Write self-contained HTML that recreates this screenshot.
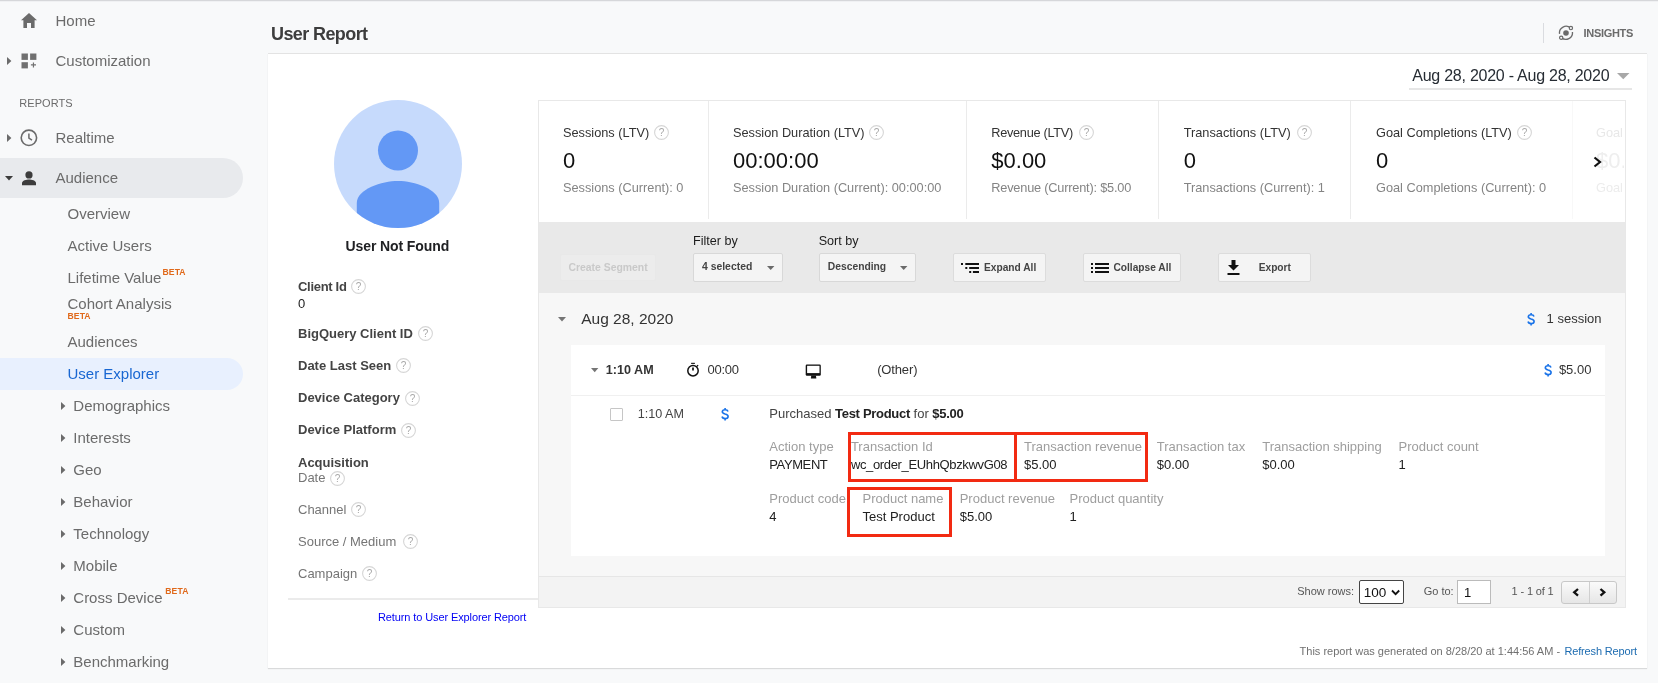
<!DOCTYPE html>
<html><head><meta charset="utf-8"><style>
html,body{margin:0;padding:0}
body{will-change:transform;width:1658px;height:683px;overflow:hidden;position:relative;background:#f8f9fa;font-family:"Liberation Sans",sans-serif}
.t{position:absolute;white-space:nowrap;line-height:1}
.r{position:absolute;display:block}
b{font-weight:700}
</style></head><body>
<div class="r" style="left:0px;top:0px;width:1658px;height:1px;background:#d6d7da"></div>
<div class="r" style="left:0px;top:1px;width:1658px;height:1px;background:#f0f1f3"></div>
<div class="r" style="left:0px;top:158px;width:243px;height:40px;background:#e8eaed;border-radius:0 20px 20px 0"></div>
<div class="r" style="left:0px;top:358px;width:243px;height:32px;background:#e8f0fe;border-radius:0 16px 16px 0"></div>
<svg class="r" style="left:21px;top:13px;" width="16" height="15" viewBox="0 0 16 15"><path d="M8 0 L16 7.2 L13.6 7.2 L13.6 15 L10 15 L10 10 L6 10 L6 15 L2.4 15 L2.4 7.2 L0 7.2 Z" fill="#6b6b6b"/></svg>
<div class="t" style="left:55.5px;top:13.00px;font-size:15px;color:#6b6b6b;font-weight:400;">Home</div>
<svg class="r" style="left:7px;top:57px;" width="5" height="8" viewBox="0 0 5 8"><path d="M0 0 L4.4 4 L0 8 Z" fill="#6b6b6b"/></svg>
<svg class="r" style="left:21px;top:53px;" width="16" height="16" viewBox="0 0 16 16"><rect x="0.5" y="0.5" width="6.4" height="6.4" fill="#707070"/><rect x="9.1" y="0.5" width="6.3" height="6.4" fill="#707070"/><rect x="0.5" y="9.2" width="6.4" height="6.2" fill="#707070"/><path d="M12.45 9.4v5.1M9.9 11.95h5.1" stroke="#707070" stroke-width="1.2"/></svg>
<div class="t" style="left:55.5px;top:53.00px;font-size:15px;color:#6b6b6b;font-weight:400;">Customization</div>
<div class="t" style="left:19.3px;top:98.00px;font-size:11px;color:#6b6b6b;font-weight:400;letter-spacing:0.05px">REPORTS</div>
<svg class="r" style="left:7px;top:134px;" width="5" height="8" viewBox="0 0 5 8"><path d="M0 0 L4.4 4 L0 8 Z" fill="#6b6b6b"/></svg>
<svg class="r" style="left:20px;top:129px;" width="18" height="18" viewBox="0 0 18 18"><circle cx="8.9" cy="8.8" r="7.7" fill="none" stroke="#6b6b6b" stroke-width="1.6"/><path d="M8.9 4.4 V9.1 L12 11.1" fill="none" stroke="#6b6b6b" stroke-width="1.5"/></svg>
<div class="t" style="left:55.5px;top:130.00px;font-size:15px;color:#6b6b6b;font-weight:400;">Realtime</div>
<svg class="r" style="left:5px;top:176px;" width="8" height="5" viewBox="0 0 8 5"><path d="M0 0 L8 0 L4 4.4 Z" fill="#3c3c3c"/></svg>
<svg class="r" style="left:22px;top:170px;" width="14" height="16" viewBox="0 0 14 16"><circle cx="7" cy="4.9" r="3.6" fill="#3c3c3c"/><path d="M0 15.2 V13 C0 10.6 4.5 9.5 7 9.5 C9.5 9.5 14 10.6 14 13 V15.2 Z" fill="#3c3c3c"/></svg>
<div class="t" style="left:55.5px;top:170.00px;font-size:15px;color:#6b6b6b;font-weight:400;">Audience</div>
<div class="t" style="left:67.5px;top:206.00px;font-size:15px;color:#6b6b6b;font-weight:400;">Overview</div>
<div class="t" style="left:67.5px;top:238.00px;font-size:15px;color:#6b6b6b;font-weight:400;">Active Users</div>
<div class="t" style="left:67.5px;top:270.00px;font-size:15px;color:#6b6b6b;font-weight:400;">Lifetime Value</div>
<div class="t" style="left:67.5px;top:296.00px;font-size:15px;color:#6b6b6b;font-weight:400;">Cohort Analysis</div>
<div class="t" style="left:67.5px;top:334.00px;font-size:15px;color:#6b6b6b;font-weight:400;">Audiences</div>
<div class="t" style="left:162.5px;top:268.00px;font-size:8.6px;color:#e0691a;font-weight:700;letter-spacing:0.1px">BETA</div>
<div class="t" style="left:67.5px;top:312.00px;font-size:8.6px;color:#e0691a;font-weight:700;letter-spacing:0.1px">BETA</div>
<div class="t" style="left:67.5px;top:366.00px;font-size:15px;color:#1967d2;font-weight:400;">User Explorer</div>
<svg class="r" style="left:61px;top:401.9px;" width="5" height="8" viewBox="0 0 5 8"><path d="M0 0 L4.4 4 L0 8 Z" fill="#6b6b6b"/></svg>
<div class="t" style="left:73.3px;top:398.00px;font-size:15px;color:#6b6b6b;font-weight:400;">Demographics</div>
<svg class="r" style="left:61px;top:433.9px;" width="5" height="8" viewBox="0 0 5 8"><path d="M0 0 L4.4 4 L0 8 Z" fill="#6b6b6b"/></svg>
<div class="t" style="left:73.3px;top:430.00px;font-size:15px;color:#6b6b6b;font-weight:400;">Interests</div>
<svg class="r" style="left:61px;top:465.9px;" width="5" height="8" viewBox="0 0 5 8"><path d="M0 0 L4.4 4 L0 8 Z" fill="#6b6b6b"/></svg>
<div class="t" style="left:73.3px;top:462.00px;font-size:15px;color:#6b6b6b;font-weight:400;">Geo</div>
<svg class="r" style="left:61px;top:497.9px;" width="5" height="8" viewBox="0 0 5 8"><path d="M0 0 L4.4 4 L0 8 Z" fill="#6b6b6b"/></svg>
<div class="t" style="left:73.3px;top:494.00px;font-size:15px;color:#6b6b6b;font-weight:400;">Behavior</div>
<svg class="r" style="left:61px;top:529.9px;" width="5" height="8" viewBox="0 0 5 8"><path d="M0 0 L4.4 4 L0 8 Z" fill="#6b6b6b"/></svg>
<div class="t" style="left:73.3px;top:526.00px;font-size:15px;color:#6b6b6b;font-weight:400;">Technology</div>
<svg class="r" style="left:61px;top:561.9px;" width="5" height="8" viewBox="0 0 5 8"><path d="M0 0 L4.4 4 L0 8 Z" fill="#6b6b6b"/></svg>
<div class="t" style="left:73.3px;top:558.00px;font-size:15px;color:#6b6b6b;font-weight:400;">Mobile</div>
<svg class="r" style="left:61px;top:593.9px;" width="5" height="8" viewBox="0 0 5 8"><path d="M0 0 L4.4 4 L0 8 Z" fill="#6b6b6b"/></svg>
<div class="t" style="left:73.3px;top:590.00px;font-size:15px;color:#6b6b6b;font-weight:400;">Cross Device</div>
<svg class="r" style="left:61px;top:625.9px;" width="5" height="8" viewBox="0 0 5 8"><path d="M0 0 L4.4 4 L0 8 Z" fill="#6b6b6b"/></svg>
<div class="t" style="left:73.3px;top:622.00px;font-size:15px;color:#6b6b6b;font-weight:400;">Custom</div>
<svg class="r" style="left:61px;top:657.9px;" width="5" height="8" viewBox="0 0 5 8"><path d="M0 0 L4.4 4 L0 8 Z" fill="#6b6b6b"/></svg>
<div class="t" style="left:73.3px;top:654.00px;font-size:15px;color:#6b6b6b;font-weight:400;">Benchmarking</div>
<div class="t" style="left:165.3px;top:587.00px;font-size:8.6px;color:#e0691a;font-weight:700;letter-spacing:0.1px">BETA</div>
<div class="t" style="left:271px;top:25.00px;font-size:18px;color:#3d3d3d;font-weight:700;letter-spacing:-0.6px">User Report</div>
<div class="r" style="left:1543px;top:23px;width:1px;height:20px;background:#dadce0"></div>
<svg class="r" style="left:1558px;top:25px;" width="17" height="17" viewBox="0 0 17 17"><path d="M1.6 8.9 A6.5 6.5 0 0 1 12.6 3.2" fill="none" stroke="#6b6b6b" stroke-width="1.35"/><path d="M14.45 7.0 A6.5 6.5 0 0 1 3.4 12.4" fill="none" stroke="#6b6b6b" stroke-width="1.35"/><circle cx="12.9" cy="3.1" r="1.65" fill="#f8f9fa" stroke="#6b6b6b" stroke-width="1.2"/><circle cx="3.2" cy="12.7" r="1.65" fill="#f8f9fa" stroke="#6b6b6b" stroke-width="1.2"/><circle cx="8" cy="8" r="2.8" fill="#6b6b6b"/></svg>
<div class="t" style="left:1583.5px;top:28.00px;font-size:11px;color:#6b6b6b;font-weight:700;letter-spacing:-0.3px">INSIGHTS</div>
<div class="r" style="left:268px;top:53px;width:1379px;height:613.5px;background:#fff;border-top:1px solid #e3e3e3;box-shadow:0 1px 1px rgba(0,0,0,0.12)"></div>
<div class="t" style="left:1412.3px;top:68.00px;font-size:16px;color:#262c33;font-weight:400;letter-spacing:-0.25px">Aug 28, 2020 - Aug 28, 2020</div>
<svg class="r" style="left:1617px;top:73px;" width="13" height="8" viewBox="0 0 13 8"><path d="M0 0 L12.5 0 L6.25 6.3 Z" fill="#a8a8a8"/></svg>
<div class="r" style="left:1409px;top:88px;width:223px;height:2px;background:#e6e6e6"></div>
<svg class="r" style="left:334px;top:100px;" width="128" height="128" viewBox="0 0 128 128"><defs><clipPath id="cc"><circle cx="64" cy="64" r="64"/></clipPath></defs><circle cx="64" cy="64" r="64" fill="#c6dafc"/><circle cx="64" cy="50.5" r="20" fill="#6398f5"/><path clip-path="url(#cc)" d="M22.8 140 V103 C22.8 89 48 81 64 81 C80 81 105.2 89 105.2 103 V140 Z" fill="#6398f5"/></svg>
<div class="t" style="left:345.5px;top:239.00px;font-size:14px;color:#202124;font-weight:700;letter-spacing:-0.1px">User Not Found</div>
<div class="t" style="left:298px;top:280.00px;font-size:13px;color:#444;font-weight:700;letter-spacing:-0.3px">Client Id</div>
<svg class="r" style="left:351.2px;top:278.6px" width="15" height="15" viewBox="0 0 15 15"><circle cx="7.5" cy="7.5" r="6.9" fill="none" stroke="#d6d6d6" stroke-width="1.1"/><text x="7.5" y="11.1" text-anchor="middle" font-family="Liberation Sans" font-size="10" fill="#a8a8a8">?</text></svg>
<div class="t" style="left:298px;top:297.00px;font-size:13px;color:#222;font-weight:400;">0</div>
<div class="t" style="left:298px;top:327.00px;font-size:13px;color:#444;font-weight:700;">BigQuery Client ID</div>
<svg class="r" style="left:418px;top:326px" width="15" height="15" viewBox="0 0 15 15"><circle cx="7.5" cy="7.5" r="6.9" fill="none" stroke="#d6d6d6" stroke-width="1.1"/><text x="7.5" y="11.1" text-anchor="middle" font-family="Liberation Sans" font-size="10" fill="#a8a8a8">?</text></svg>
<div class="t" style="left:298px;top:359.00px;font-size:13px;color:#444;font-weight:700;">Date Last Seen</div>
<svg class="r" style="left:396px;top:358.2px" width="15" height="15" viewBox="0 0 15 15"><circle cx="7.5" cy="7.5" r="6.9" fill="none" stroke="#d6d6d6" stroke-width="1.1"/><text x="7.5" y="11.1" text-anchor="middle" font-family="Liberation Sans" font-size="10" fill="#a8a8a8">?</text></svg>
<div class="t" style="left:298px;top:391.00px;font-size:13px;color:#444;font-weight:700;">Device Category</div>
<svg class="r" style="left:405.4px;top:390.6px" width="15" height="15" viewBox="0 0 15 15"><circle cx="7.5" cy="7.5" r="6.9" fill="none" stroke="#d6d6d6" stroke-width="1.1"/><text x="7.5" y="11.1" text-anchor="middle" font-family="Liberation Sans" font-size="10" fill="#a8a8a8">?</text></svg>
<div class="t" style="left:298px;top:423.00px;font-size:13px;color:#444;font-weight:700;">Device Platform</div>
<svg class="r" style="left:401.3px;top:422.7px" width="15" height="15" viewBox="0 0 15 15"><circle cx="7.5" cy="7.5" r="6.9" fill="none" stroke="#d6d6d6" stroke-width="1.1"/><text x="7.5" y="11.1" text-anchor="middle" font-family="Liberation Sans" font-size="10" fill="#a8a8a8">?</text></svg>
<div class="t" style="left:298px;top:456.00px;font-size:13px;color:#444;font-weight:700;">Acquisition</div>
<div class="t" style="left:298px;top:471.00px;font-size:13px;color:#757575;font-weight:400;">Date</div>
<svg class="r" style="left:330px;top:471px" width="15" height="15" viewBox="0 0 15 15"><circle cx="7.5" cy="7.5" r="6.9" fill="none" stroke="#d6d6d6" stroke-width="1.1"/><text x="7.5" y="11.1" text-anchor="middle" font-family="Liberation Sans" font-size="10" fill="#a8a8a8">?</text></svg>
<div class="t" style="left:298px;top:503.00px;font-size:13px;color:#757575;font-weight:400;">Channel</div>
<svg class="r" style="left:350.9px;top:502px" width="15" height="15" viewBox="0 0 15 15"><circle cx="7.5" cy="7.5" r="6.9" fill="none" stroke="#d6d6d6" stroke-width="1.1"/><text x="7.5" y="11.1" text-anchor="middle" font-family="Liberation Sans" font-size="10" fill="#a8a8a8">?</text></svg>
<div class="t" style="left:298px;top:535.00px;font-size:13px;color:#757575;font-weight:400;">Source / Medium</div>
<svg class="r" style="left:402.7px;top:534px" width="15" height="15" viewBox="0 0 15 15"><circle cx="7.5" cy="7.5" r="6.9" fill="none" stroke="#d6d6d6" stroke-width="1.1"/><text x="7.5" y="11.1" text-anchor="middle" font-family="Liberation Sans" font-size="10" fill="#a8a8a8">?</text></svg>
<div class="t" style="left:298px;top:567.00px;font-size:13px;color:#757575;font-weight:400;">Campaign</div>
<svg class="r" style="left:362px;top:566px" width="15" height="15" viewBox="0 0 15 15"><circle cx="7.5" cy="7.5" r="6.9" fill="none" stroke="#d6d6d6" stroke-width="1.1"/><text x="7.5" y="11.1" text-anchor="middle" font-family="Liberation Sans" font-size="10" fill="#a8a8a8">?</text></svg>
<div class="r" style="left:288px;top:598px;width:250px;height:2px;background:#ebebeb"></div>
<div class="t" style="left:378px;top:612.00px;font-size:11px;color:#0000f5;font-weight:400;letter-spacing:-0.11px">Return to User Explorer Report</div>
<div class="r" style="left:538px;top:100px;width:1088px;height:508px;border:1px solid #e8e8e8;box-sizing:border-box;background:#f7f7f7"></div>
<div class="r" style="left:539px;top:101px;width:1086px;height:121px;background:#fff"></div>
<div class="r" style="left:708px;top:101px;width:1px;height:118px;background:#ebebeb"></div>
<div class="r" style="left:966px;top:101px;width:1px;height:118px;background:#ebebeb"></div>
<div class="r" style="left:1158px;top:101px;width:1px;height:118px;background:#ebebeb"></div>
<div class="r" style="left:1350px;top:101px;width:1px;height:118px;background:#ebebeb"></div>
<div class="r" style="left:1572px;top:101px;width:1px;height:118px;background:#f8f8f8"></div>
<div class="t" style="left:563px;top:127.00px;font-size:12.75px;color:#333;font-weight:400;">Sessions (LTV)</div>
<svg class="r" style="left:654.2px;top:125.3px" width="15" height="15" viewBox="0 0 15 15"><circle cx="7.5" cy="7.5" r="6.9" fill="none" stroke="#d6d6d6" stroke-width="1.1"/><text x="7.5" y="11.1" text-anchor="middle" font-family="Liberation Sans" font-size="10" fill="#a8a8a8">?</text></svg>
<div class="t" style="left:563px;top:150.00px;font-size:22px;color:#111;font-weight:400;">0</div>
<div class="t" style="left:563px;top:182.00px;font-size:12.75px;color:#848484;font-weight:400;">Sessions (Current): 0</div>
<div class="t" style="left:733px;top:127.00px;font-size:12.75px;color:#333;font-weight:400;">Session Duration (LTV)</div>
<svg class="r" style="left:869.3px;top:125.3px" width="15" height="15" viewBox="0 0 15 15"><circle cx="7.5" cy="7.5" r="6.9" fill="none" stroke="#d6d6d6" stroke-width="1.1"/><text x="7.5" y="11.1" text-anchor="middle" font-family="Liberation Sans" font-size="10" fill="#a8a8a8">?</text></svg>
<div class="t" style="left:733px;top:150.00px;font-size:22px;color:#111;font-weight:400;">00:00:00</div>
<div class="t" style="left:733px;top:182.00px;font-size:12.75px;color:#848484;font-weight:400;">Session Duration (Current): 00:00:00</div>
<div class="t" style="left:991.3px;top:127.00px;font-size:12.75px;color:#333;font-weight:400;letter-spacing:-0.3px">Revenue (LTV)</div>
<svg class="r" style="left:1079px;top:125.3px" width="15" height="15" viewBox="0 0 15 15"><circle cx="7.5" cy="7.5" r="6.9" fill="none" stroke="#d6d6d6" stroke-width="1.1"/><text x="7.5" y="11.1" text-anchor="middle" font-family="Liberation Sans" font-size="10" fill="#a8a8a8">?</text></svg>
<div class="t" style="left:991.3px;top:150.00px;font-size:22px;color:#111;font-weight:400;">$0.00</div>
<div class="t" style="left:991.3px;top:182.00px;font-size:12.75px;color:#848484;font-weight:400;letter-spacing:-0.2px">Revenue (Current): $5.00</div>
<div class="t" style="left:1183.7px;top:127.00px;font-size:12.75px;color:#333;font-weight:400;">Transactions (LTV)</div>
<svg class="r" style="left:1297.2px;top:125.3px" width="15" height="15" viewBox="0 0 15 15"><circle cx="7.5" cy="7.5" r="6.9" fill="none" stroke="#d6d6d6" stroke-width="1.1"/><text x="7.5" y="11.1" text-anchor="middle" font-family="Liberation Sans" font-size="10" fill="#a8a8a8">?</text></svg>
<div class="t" style="left:1183.7px;top:150.00px;font-size:22px;color:#111;font-weight:400;">0</div>
<div class="t" style="left:1183.7px;top:182.00px;font-size:12.75px;color:#848484;font-weight:400;">Transactions (Current): 1</div>
<div class="t" style="left:1376px;top:127.00px;font-size:12.75px;color:#333;font-weight:400;">Goal Completions (LTV)</div>
<svg class="r" style="left:1517px;top:125.3px" width="15" height="15" viewBox="0 0 15 15"><circle cx="7.5" cy="7.5" r="6.9" fill="none" stroke="#d6d6d6" stroke-width="1.1"/><text x="7.5" y="11.1" text-anchor="middle" font-family="Liberation Sans" font-size="10" fill="#a8a8a8">?</text></svg>
<div class="t" style="left:1376px;top:150.00px;font-size:22px;color:#111;font-weight:400;">0</div>
<div class="t" style="left:1376px;top:182.00px;font-size:12.75px;color:#848484;font-weight:400;">Goal Completions (Current): 0</div>
<div class="t" style="left:1596px;top:127.00px;font-size:12.75px;color:#e8e8e8;font-weight:400;">Goal</div>
<div class="t" style="left:1596px;top:150.00px;font-size:22px;color:#eeeeee;font-weight:400;">$0.</div>
<div class="t" style="left:1596px;top:182.00px;font-size:12.75px;color:#ececec;font-weight:400;">Goal</div>
<div class="r" style="left:1624px;top:101px;width:1px;height:120px;background:#fff"></div>
<svg class="r" style="left:1593px;top:156px;" width="9" height="12" viewBox="0 0 9 12"><path d="M1.5 1.5 L7 6 L1.5 10.5" fill="none" stroke="#111" stroke-width="2.2"/></svg>
<div class="r" style="left:539px;top:222px;width:1086px;height:71px;background:#e9e9e9"></div>
<div class="r" style="left:560px;top:254px;width:96px;height:27px;background:#ececec;border:1px solid #e8e8e8;box-sizing:border-box;border-radius:2px"></div>
<div class="t" style="left:568.5px;top:263.00px;font-size:10.4px;color:#c9c9c9;font-weight:700;">Create Segment</div>
<div class="t" style="left:693px;top:235.00px;font-size:12.6px;color:#1c1c1c;font-weight:400;">Filter by</div>
<div class="t" style="left:818.7px;top:235.00px;font-size:12.6px;color:#1c1c1c;font-weight:400;">Sort by</div>
<div class="r" style="left:693px;top:253px;width:90px;height:28.5px;background:#f4f4f4;border:1px solid #d8d8d8;box-sizing:border-box;border-radius:2px"></div>
<div class="t" style="left:702px;top:262.00px;font-size:10.4px;color:#444;font-weight:700;">4 selected</div>
<svg class="r" style="left:767px;top:266px;" width="8" height="5" viewBox="0 0 8 5"><path d="M0 0 L7.4 0 L3.7 3.9 Z" fill="#6a6a6a"/></svg>
<div class="r" style="left:819px;top:253px;width:96.5px;height:28.5px;background:#f4f4f4;border:1px solid #d8d8d8;box-sizing:border-box;border-radius:2px"></div>
<div class="t" style="left:827.8px;top:262.00px;font-size:10.3px;color:#444;font-weight:700;">Descending</div>
<svg class="r" style="left:899.5px;top:266px;" width="8" height="5" viewBox="0 0 8 5"><path d="M0 0 L7.4 0 L3.7 3.9 Z" fill="#6a6a6a"/></svg>
<div class="r" style="left:952.5px;top:253px;width:93px;height:28.5px;background:#f4f4f4;border:1px solid #dcdcdc;box-sizing:border-box;border-radius:2px"></div>
<div class="r" style="left:1082.5px;top:253px;width:98px;height:28.5px;background:#f4f4f4;border:1px solid #dcdcdc;box-sizing:border-box;border-radius:2px"></div>
<div class="r" style="left:1217.5px;top:253px;width:93.5px;height:28.5px;background:#f4f4f4;border:1px solid #dcdcdc;box-sizing:border-box;border-radius:2px"></div>
<svg class="r" style="left:961px;top:263px;" width="18" height="10" viewBox="0 0 18 10"><rect x="0" y="0" width="2" height="2" fill="#111"/><rect x="4.3" y="0" width="13.7" height="2" fill="#111"/><rect x="4.3" y="4" width="2" height="2" fill="#111"/><rect x="8.2" y="4" width="9.8" height="2" fill="#111"/><rect x="8.2" y="8" width="2" height="2" fill="#111"/><rect x="11.9" y="8" width="6.1" height="2" fill="#111"/></svg>
<div class="t" style="left:984px;top:263.00px;font-size:10.2px;color:#444;font-weight:700;">Expand All</div>
<svg class="r" style="left:1091px;top:263px;" width="18" height="10" viewBox="0 0 18 10"><rect x="0" y="0" width="2" height="2" fill="#111"/><rect x="4" y="0" width="14" height="2" fill="#111"/><rect x="0" y="4" width="2" height="2" fill="#111"/><rect x="4" y="4" width="14" height="2" fill="#111"/><rect x="0" y="8" width="2" height="2" fill="#111"/><rect x="4" y="8" width="14" height="2" fill="#111"/></svg>
<div class="t" style="left:1113.4px;top:263.00px;font-size:10.2px;color:#444;font-weight:700;">Collapse All</div>
<svg class="r" style="left:1226.5px;top:260px;" width="14" height="15" viewBox="0 0 14 15"><path d="M4.5 0 H8.5 V5 H12 L6.5 10.5 L1 5 H4.5 Z" fill="#111"/><rect x="0.5" y="13" width="12" height="2" fill="#111"/></svg>
<div class="t" style="left:1258.7px;top:263.00px;font-size:10.2px;color:#444;font-weight:700;">Export</div>
<svg class="r" style="left:558px;top:316.5px;" width="8" height="5" viewBox="0 0 8 5"><path d="M0 0 L8 0 L4 4.6 Z" fill="#757575"/></svg>
<div class="t" style="left:581.2px;top:311.00px;font-size:15.5px;color:#333;font-weight:400;">Aug 28, 2020</div>
<svg class="r" style="left:1526.5px;top:313px" width="9" height="13" viewBox="0 0 9 13"><path d="M7 3.5 C6.7 2.3 5.6 1.7 4.1 1.7 C2.4 1.7 1.3 2.6 1.3 3.8 C1.3 5.1 2.5 5.6 4.1 6 C5.9 6.4 7.1 7 7.1 8.4 C7.1 9.7 5.9 10.5 4.1 10.5 C2.4 10.5 1.3 9.7 1.1 8.5 M4.1 -0.2 V2.2 M4.1 10 V12.6" fill="none" stroke="#1a73e8" stroke-width="1.6"/></svg>
<div class="t" style="left:1546.6px;top:312.00px;font-size:13px;color:#333;font-weight:400;">1 session</div>
<div class="r" style="left:571px;top:345px;width:1034px;height:211px;background:#fff"></div>
<div class="r" style="left:571px;top:395px;width:1034px;height:1px;background:#f0f0f0"></div>
<svg class="r" style="left:591px;top:368px;" width="8" height="5" viewBox="0 0 8 5"><path d="M0 0 L7.4 0 L3.7 4.2 Z" fill="#757575"/></svg>
<div class="t" style="left:605.8px;top:364.00px;font-size:12.6px;color:#333;font-weight:700;">1:10 AM</div>
<svg class="r" style="left:686px;top:362px;" width="14" height="15" viewBox="0 0 14 15"><rect x="5.1" y="0.8" width="3.8" height="1.1" fill="#111"/><circle cx="7" cy="8.7" r="5.2" fill="none" stroke="#111" stroke-width="1.5"/><path d="M7 5.4 V8.6" stroke="#111" stroke-width="1.7"/><path d="M10.6 4.6 L12.1 3.1" stroke="#111" stroke-width="1.3"/></svg>
<div class="t" style="left:707.6px;top:363.00px;font-size:13px;color:#333;font-weight:400;letter-spacing:-0.3px">00:00</div>
<svg class="r" style="left:805px;top:364px;" width="17" height="15" viewBox="0 0 17 15"><rect x="0.7" y="0.5" width="15.1" height="11.3" rx="1.2" fill="#111"/><rect x="2.1" y="1.8" width="12.4" height="7.3" fill="#fff"/><path d="M5.9 11.5 H11.3 L10.9 13.2 H11.3 V14.4 H5.9 V13.2 H6.3 Z" fill="#111"/></svg>
<div class="t" style="left:877.2px;top:363.00px;font-size:13px;color:#333;font-weight:400;letter-spacing:-0.15px">(Other)</div>
<svg class="r" style="left:1543.5px;top:364px" width="9" height="13" viewBox="0 0 9 13"><path d="M7 3.5 C6.7 2.3 5.6 1.7 4.1 1.7 C2.4 1.7 1.3 2.6 1.3 3.8 C1.3 5.1 2.5 5.6 4.1 6 C5.9 6.4 7.1 7 7.1 8.4 C7.1 9.7 5.9 10.5 4.1 10.5 C2.4 10.5 1.3 9.7 1.1 8.5 M4.1 -0.2 V2.2 M4.1 10 V12.6" fill="none" stroke="#1a73e8" stroke-width="1.6"/></svg>
<div class="t" style="left:1558.9px;top:363.00px;font-size:13px;color:#333;font-weight:400;">$5.00</div>
<div class="r" style="left:610px;top:408px;width:13px;height:13px;border:1px solid #c6c6c6;box-sizing:border-box;background:#fff;border-radius:1px"></div>
<div class="t" style="left:637.8px;top:408.00px;font-size:12.6px;color:#444;font-weight:400;">1:10 AM</div>
<svg class="r" style="left:720.5px;top:408px" width="9" height="13" viewBox="0 0 9 13"><path d="M7 3.5 C6.7 2.3 5.6 1.7 4.1 1.7 C2.4 1.7 1.3 2.6 1.3 3.8 C1.3 5.1 2.5 5.6 4.1 6 C5.9 6.4 7.1 7 7.1 8.4 C7.1 9.7 5.9 10.5 4.1 10.5 C2.4 10.5 1.3 9.7 1.1 8.5 M4.1 -0.2 V2.2 M4.1 10 V12.6" fill="none" stroke="#1a73e8" stroke-width="1.6"/></svg>
<div class="t" style="left:769.3px;top:407.00px;font-size:13px;color:#444;font-weight:400;">Purchased <b style="color:#222;letter-spacing:-0.3px">Test Product</b> for <b style="color:#222;letter-spacing:-0.3px">$5.00</b></div>
<div class="t" style="left:769.3px;top:440.00px;font-size:13px;color:#9e9e9e;font-weight:400;">Action type</div>
<div class="t" style="left:769.3px;top:458.00px;font-size:13px;color:#212121;font-weight:400;letter-spacing:-0.4px">PAYMENT</div>
<div class="t" style="left:850.9px;top:440.00px;font-size:13px;color:#9e9e9e;font-weight:400;">Transaction Id</div>
<div class="t" style="left:850.9px;top:458.00px;font-size:13px;color:#212121;font-weight:400;letter-spacing:-0.35px">wc_order_EUhhQbzkwvG08</div>
<div class="t" style="left:1024px;top:440.00px;font-size:13px;color:#9e9e9e;font-weight:400;">Transaction revenue</div>
<div class="t" style="left:1024px;top:458.00px;font-size:13px;color:#212121;font-weight:400;letter-spacing:0px">$5.00</div>
<div class="t" style="left:1156.8px;top:440.00px;font-size:13px;color:#9e9e9e;font-weight:400;">Transaction tax</div>
<div class="t" style="left:1156.8px;top:458.00px;font-size:13px;color:#212121;font-weight:400;letter-spacing:0px">$0.00</div>
<div class="t" style="left:1262.2px;top:440.00px;font-size:13px;color:#9e9e9e;font-weight:400;">Transaction shipping</div>
<div class="t" style="left:1262.2px;top:458.00px;font-size:13px;color:#212121;font-weight:400;letter-spacing:0px">$0.00</div>
<div class="t" style="left:1398.5px;top:440.00px;font-size:13px;color:#9e9e9e;font-weight:400;">Product count</div>
<div class="t" style="left:1398.5px;top:458.00px;font-size:13px;color:#212121;font-weight:400;letter-spacing:0px">1</div>
<div class="t" style="left:769.3px;top:492.00px;font-size:13px;color:#9e9e9e;font-weight:400;">Product code</div>
<div class="t" style="left:769.3px;top:510.00px;font-size:13px;color:#212121;font-weight:400;">4</div>
<div class="t" style="left:862.5px;top:492.00px;font-size:13px;color:#9e9e9e;font-weight:400;">Product name</div>
<div class="t" style="left:862.5px;top:510.00px;font-size:13px;color:#212121;font-weight:400;">Test Product</div>
<div class="t" style="left:959.7px;top:492.00px;font-size:13px;color:#9e9e9e;font-weight:400;">Product revenue</div>
<div class="t" style="left:959.7px;top:510.00px;font-size:13px;color:#212121;font-weight:400;">$5.00</div>
<div class="t" style="left:1069.5px;top:492.00px;font-size:13px;color:#9e9e9e;font-weight:400;">Product quantity</div>
<div class="t" style="left:1069.5px;top:510.00px;font-size:13px;color:#212121;font-weight:400;">1</div>
<div class="r" style="left:848px;top:432px;width:168.5px;height:50px;border:3px solid #f22a12;box-sizing:border-box"></div>
<div class="r" style="left:1014px;top:432px;width:133.5px;height:50px;border:3px solid #f22a12;box-sizing:border-box"></div>
<div class="r" style="left:847px;top:487px;width:104.5px;height:49.5px;border:3px solid #f22a12;box-sizing:border-box"></div>
<div class="r" style="left:539px;top:576px;width:1086px;height:1px;background:#e6e6e6"></div>
<div class="r" style="left:539px;top:577px;width:1086px;height:30px;background:#f3f3f3"></div>
<div class="t" style="left:1297.2px;top:586.00px;font-size:11px;color:#555;font-weight:400;">Show rows:</div>
<div class="r" style="left:1359px;top:580px;width:44.5px;height:24px;border:1px solid #444;border-radius:2px;box-sizing:border-box;background:#fff"></div>
<div class="t" style="left:1363.7px;top:586.00px;font-size:13.5px;color:#111;font-weight:400;">100</div>
<svg class="r" style="left:1390.5px;top:589px;" width="10" height="8" viewBox="0 0 10 8"><path d="M1 1.5 L4.6 5.2 L8.2 1.5" fill="none" stroke="#111" stroke-width="1.8"/></svg>
<div class="t" style="left:1423.7px;top:586.00px;font-size:11px;color:#555;font-weight:400;">Go to:</div>
<div class="r" style="left:1457px;top:580px;width:34px;height:24px;border:1px solid #bbb;box-sizing:border-box;background:#fff"></div>
<div class="t" style="left:1464px;top:586.00px;font-size:13px;color:#111;font-weight:400;">1</div>
<div class="t" style="left:1511.6px;top:586.00px;font-size:11px;color:#555;font-weight:400;letter-spacing:-0.15px">1 - 1 of 1</div>
<div class="r" style="left:1561px;top:581px;width:56px;height:22.5px;border:1px solid #c8c8c8;border-radius:3px;box-sizing:border-box;background:linear-gradient(#fafafa,#e6e6e6)"></div>
<div class="r" style="left:1589px;top:582px;width:1px;height:20.5px;background:#cfcfcf"></div>
<svg class="r" style="left:1572px;top:587.5px;" width="8" height="9" viewBox="0 0 8 9"><path d="M6 1 L2.2 4.3 L6 7.6" fill="none" stroke="#111" stroke-width="2.3"/></svg>
<svg class="r" style="left:1599px;top:587.5px;" width="8" height="9" viewBox="0 0 8 9"><path d="M1.5 1 L5.3 4.3 L1.5 7.6" fill="none" stroke="#111" stroke-width="2.3"/></svg>
<div class="t" style="left:1299.6px;top:646.00px;font-size:11px;color:#707070;font-weight:400;">This report was generated on 8/28/20 at 1:44:56 AM - </div>
<div class="t" style="left:1564.4px;top:646.00px;font-size:11px;color:#1c6bb0;font-weight:400;letter-spacing:-0.15px">Refresh Report</div>
</body></html>
